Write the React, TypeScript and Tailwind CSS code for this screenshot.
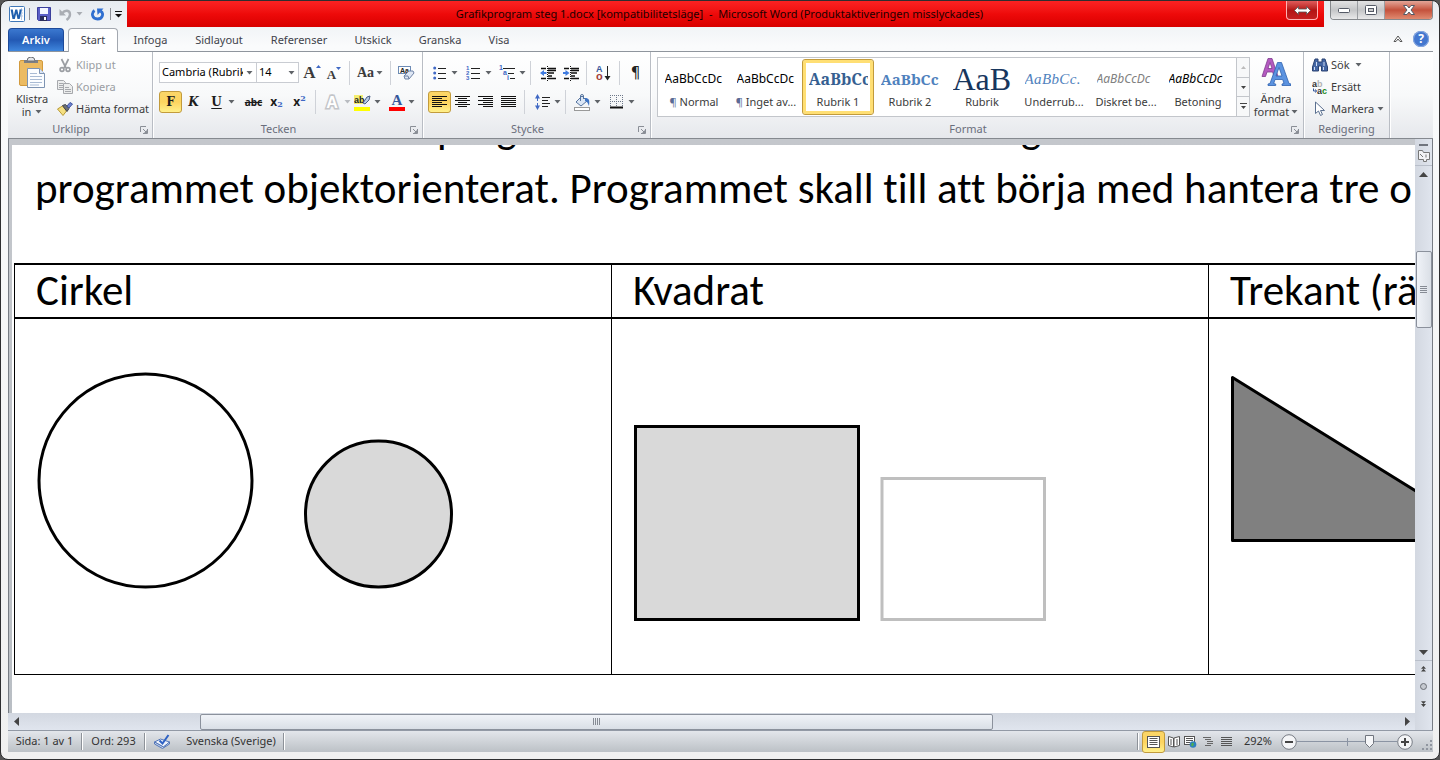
import React from "react";

type Kids = { children?: React.ReactNode };

const Caret = ({ tone = "#5f6368" }: { tone?: string }) => (
  <svg width="7" height="4" viewBox="0 0 7 4" className="shrink-0" aria-hidden="true">
    <path d="M0.5 0h6L3.5 3.6z" fill={tone} />
  </svg>
);

const Sep = () => <span className="h-6 w-px shrink-0 bg-[#cfd2d8]" />;

const Tool = ({ label, on = false, children }: Kids & { label: string; on?: boolean }) => (
  <button
    aria-label={label}
    className={
      on
        ? "flex h-[22px] w-[23px] shrink-0 items-center justify-center rounded-[3px] border border-[#c29b3c] bg-linear-to-b from-[#fbd668] via-[#fdd45f] to-[#fff08a]"
        : "flex h-[22px] w-[23px] shrink-0 items-center justify-center"
    }
  >
    {children}
  </button>
);

const Drop = ({ label, tone, tight = false }: { label: string; tone?: string; tight?: boolean }) => (
  <button
    aria-label={label}
    className={tight ? "flex h-[22px] w-[7px] shrink-0 items-center" : "flex h-[22px] w-[11px] shrink-0 items-center"}
  >
    <Caret tone={tone} />
  </button>
);

const Launcher = () => (
  <button aria-label="Visa dialogruta" className="absolute right-1 bottom-1">
    <svg width="8" height="8" viewBox="0 0 8 8" fill="none" stroke="#8a8e96">
      <path d="M0.5 6V0.5H6M3 3l3 3M7.5 3v4.5H3" />
      <path d="M7 4v3H4z" fill="#8a8e96" stroke="none" />
    </svg>
  </button>
);

const Group = ({
  title,
  size,
  launcher = true,
  children,
}: Kids & { title: string; size: string; launcher?: boolean }) => (
  <section
    aria-label={title}
    className={`relative flex shrink-0 flex-col border-r border-[#b9bdc4] shadow-[1px_0_0_#fff] ${size}`}
  >
    <div className="flex h-[69px] min-w-0">{children}</div>
    <h2 className={launcher ? "pr-[18px] text-center leading-4 text-[#6a6e7c]" : "text-center leading-4 text-[#6a6e7c]"}>{title}</h2>
    {launcher && <Launcher />}
  </section>
);

const WordLogo = () => (
  <svg width="16" height="16" viewBox="0 0 16 16" className="shrink-0" aria-hidden="true">
    <rect x="0.5" y="0.5" width="15" height="15" rx="1" fill="#fff" stroke="#3f78b8" />
    <path d="M12.500 2v12M10 4h4M10 7h4M10 10h4" stroke="#b7cbe4" />
    <path d="M1.6 3.5h2.2l1 6 1.5-6h2l1.3 6 1.1-6h2.1L10.7 13H8.5L7.2 7.5 5.8 13H3.5z" fill="#1f5fae" />
  </svg>
);

const SaveIcon = () => (
  <svg width="14" height="14" viewBox="0 0 14 14" aria-hidden="true">
    <path d="M0.5 0.5h13v13h-12l-1-1z" fill="#5b5fc7" stroke="#3b3f9c" />
    <rect x="3" y="1" width="8" height="6" fill="#f4f7ff" />
    <rect x="3" y="9" width="7" height="5" fill="#2a2d5c" />
    <rect x="7" y="10" width="2" height="3" fill="#fff" />
  </svg>
);

const UndoIcon = () => (
  <svg width="13" height="13" viewBox="0 0 13 13" fill="none" aria-hidden="true">
    <path d="M3 5.500C6 1.500 11 2 11 6.500c0 2.500-1.500 4-3.500 5.500" stroke="#a9adb3" strokeWidth="2.400" />
    <path d="M0.500 1v6.500h6.500z" fill="#a9adb3" />
  </svg>
);

const RedoIcon = () => (
  <svg width="13" height="13" viewBox="0 0 13 13" fill="none" aria-hidden="true">
    <path d="M3.500 2.500C0 5 1 11 6.500 11s6.500-6 3-8" stroke="#2f6fd0" strokeWidth="2.800" />
    <path d="M6 0.500h6.500L6.500 7z" fill="#2f6fd0" />
  </svg>
);

const PasteIcon = () => (
  <svg width="28" height="32" viewBox="0 0 28 32" aria-hidden="true">
    <rect x="1.500" y="3.500" width="23" height="25" rx="1.500" fill="#ecbb62" stroke="#d29a3d" />
    <path d="M6 3h14v3H6z" fill="#7d8085" />
    <path d="M9 4a4 4 0 0 1 8 0z" fill="#e5e7ea" stroke="#6e7176" />
    <path d="M9.500 11.500h12l5 5v14h-17z" fill="#fbfdff" stroke="#7d93b2" />
    <path d="M21.500 11.500v5h5" fill="#dbe6f5" stroke="#7d93b2" />
    <path d="M12 16.500h7M12 19.500h12M12 22.500h12M12 25.500h12M12 28h9" stroke="#a9bbd4" />
  </svg>
);

const CutIcon = () => (
  <svg width="16" height="15" viewBox="0 0 16 15" fill="none" stroke="#9b9ea3" strokeWidth="1.700" aria-hidden="true">
    <path d="M4.500 1l4.500 9M11.500 1L7 10" />
    <circle cx="5" cy="11.500" r="1.900" />
    <circle cx="11" cy="11.500" r="1.900" />
  </svg>
);

const CopyIcon = () => (
  <svg width="16" height="14" viewBox="0 0 16 14" fill="#eceded" stroke="#a6a8ac" aria-hidden="true">
    <path d="M0.500 0.500h6l2 2v7h-8z" />
    <path d="M2 3.500h4M2 5.500h4M2 7.500h4" />
    <path d="M6.500 3.500h6l3 3v7h-9z" />
    <path d="M8 7.500h4M8 9.500h6M8 11.500h6" />
  </svg>
);

const BrushIcon = () => (
  <svg width="16" height="14" viewBox="0 0 16 14" aria-hidden="true">
    <path d="M0.500 7l5-3 4 5-3.500 4.500z" fill="#f4df82" stroke="#b99a35" />
    <path d="M5.500 3.500l3-1 3.500 4-2 3z" fill="#6c7078" stroke="#43464d" />
    <path d="M10 4l3-3.500 2.500 1.500-3.500 4z" fill="#6f84cf" stroke="#3f53a0" />
  </svg>
);

const ClearIcon = () => (
  <svg width="17" height="16" viewBox="0 0 17 16" aria-hidden="true">
    <rect x="0.500" y="1.500" width="12" height="7" fill="#fff" stroke="#6d8bb5" />
    <text x="2" y="8" fontSize="7" fontWeight="700" fontFamily="Liberation Sans" fill="#222">Aa</text>
    <path d="M6 11l5-5h4l1 2-5 6H7z" fill="#dfe7f4" stroke="#6f83a6" />
    <path d="M6 11l4 0 1 3" fill="none" stroke="#6f83a6" />
  </svg>
);

const HighlightIcon = () => (
  <svg width="17" height="17" viewBox="0 0 17 17" aria-hidden="true">
    <rect x="0" y="1" width="9" height="9" fill="#f4ee70" />
    <text x="0" y="9" fontSize="9" fontWeight="700" fontFamily="Liberation Sans" fill="#222">ab</text>
    <path d="M9 9l4-6 3-1-1 4-4 4z" fill="#b9cbe6" stroke="#4a5f86" />
    <rect x="0" y="13" width="16" height="4" fill="#ff0" />
  </svg>
);

const FontColorIcon = () => (
  <svg width="16" height="17" viewBox="0 0 16 17" aria-hidden="true">
    <text x="8" y="11" textAnchor="middle" fontSize="15" fontWeight="700" fontFamily="Liberation Serif" fill="#35579b">A</text>
    <rect x="0" y="13" width="16" height="4" fill="#f00" />
  </svg>
);

const BulletIcon = () => (
  <svg width="14" height="14" viewBox="0 0 14 14" aria-hidden="true">
    <g fill="#3f68c4">
      <circle cx="1.700" cy="2" r="1.500" />
      <circle cx="1.700" cy="7" r="1.500" />
      <circle cx="1.700" cy="12" r="1.500" />
    </g>
    <path d="M5 2.500h8M5 7.500h8M5 12.500h8" stroke="#222" />
  </svg>
);

const NumberIcon = () => (
  <svg width="15" height="16" viewBox="0 0 15 16" aria-hidden="true">
    <g fill="#3f68c4" fontSize="6" fontWeight="700" fontFamily="Liberation Sans">
      <text x="0" y="5">1</text>
      <text x="0" y="10">2</text>
      <text x="0" y="15">3</text>
    </g>
    <path d="M5 3.500h9M5 8.500h9M5 13.500h9" stroke="#222" />
  </svg>
);

const MultiIcon = () => (
  <svg width="17" height="16" viewBox="0 0 17 16" aria-hidden="true">
    <g fill="#3f68c4" fontSize="7" fontWeight="700" fontFamily="Liberation Sans">
      <text x="0" y="5">1</text>
      <text x="4" y="10">a</text>
      <text x="8" y="15">i</text>
    </g>
    <path d="M4 3.500h12M9 8.500h6M11 13.500h5" stroke="#222" />
  </svg>
);

const IndentIcon = ({ out = false }: { out?: boolean }) => (
  <svg width="17" height="15" viewBox="0 0 17 15" aria-hidden="true">
    <path d="M1 2.500h5M8 2.500h8M8 4.500h8M8 7h6M8 10h4M1 12.500h5M8 12.500h8" stroke="#111" strokeWidth="1.400" />
    <path d="M7.500 0v15" stroke="#111" strokeDasharray="1 1" />
    <path d={out ? "M0 7l4-3v2h2.500v2H4v2z" : "M6.500 7l-4-3v2H0v2h2.500v2z"} fill="#3f7be0" />
  </svg>
);

const SortIcon = () => (
  <svg width="15" height="16" viewBox="0 0 15 16" aria-hidden="true">
    <text x="0" y="7" fontSize="9" fontWeight="700" fontFamily="Liberation Sans" fill="#35579b">A</text>
    <text x="0" y="15" fontSize="11" fontWeight="700" fontFamily="Liberation Sans" fill="#a3403a">o</text>
    <path d="M11.500 1v12" stroke="#222" />
    <path d="M8.500 11h6l-3 4.500z" fill="#222" />
  </svg>
);

const AlignIcon = ({ d }: { d: string }) => (
  <svg width="15" height="12" viewBox="0 0 15 12" aria-hidden="true">
    <path d={d} stroke="#111" />
  </svg>
);

const SpacingIcon = () => (
  <svg width="15" height="16" viewBox="0 0 15 16" aria-hidden="true">
    <path d="M2.500 3v10" stroke="#3f68c4" strokeDasharray="4 2" />
    <path d="M0 4.500L2.500 0 5 4.500zM0 11.500L2.500 16 5 11.500z" fill="#3f68c4" />
    <path d="M7 3.500h8M7 6.500h6M7 9.500h8M7 12.500h6" stroke="#222" />
  </svg>
);

const BucketIcon = () => (
  <svg width="17" height="17" viewBox="0 0 17 17" aria-hidden="true">
    <path d="M2 8l6-6 5 5-6 5z" fill="#dbe6f5" stroke="#56749f" />
    <path d="M6.500 7V2a1.500 1.500 0 0 1 3 0v3" fill="none" stroke="#56749f" />
    <path d="M11 4c4 0 5 2 4 8-1-2-1-4-4-5z" fill="#3f74c4" />
    <rect x="0.500" y="13.500" width="15" height="3" fill="#fff" stroke="#999" />
  </svg>
);

const BorderIcon = () => (
  <svg width="13" height="14" viewBox="0 0 13 14" aria-hidden="true">
    <path d="M0.500 0v12M6.500 0v12M12.500 0v12M0 0.500h13M0 6.500h13" stroke="#6d7789" strokeDasharray="1 1" />
    <path d="M0 12.500h13" stroke="#111" strokeWidth="2" />
  </svg>
);

const ChangeStylesIcon = () => (
  <svg width="30" height="29" viewBox="0 0 30 29" aria-hidden="true">
    <path d="M1 18.500L7 0.500h4l6 18h-4l-1.300-4.500H6L4.500 18.500zM7 10.500h4L9 4.500z" fill="#b45ac0" stroke="#7e3b8e" strokeWidth="0.800" fillRule="evenodd" />
    <path d="M7 27.500v-1.500l2-0.500L16.500 4.500h4L28 25.500l2 0.500v1.500h-9v-1.500l2-0.500-1.300-4H14l-1.300 4 2 0.500v1.500zM15 18h6L18 9.500z" fill="#5b93e0" stroke="#2f62b0" strokeWidth="0.800" fillRule="evenodd" />
  </svg>
);

const FindIcon = () => (
  <svg width="16" height="14" viewBox="0 0 16 14" aria-hidden="true">
    <path d="M3 1h3v3h4V1h3l2.500 8v4H9.500V8h-3v5H0.500V9z" fill="#4467a5" stroke="#2a4272" />
    <path d="M2.500 9v3M4.500 4v4M11.500 9v3M12 4v4" stroke="#cfdcf2" />
  </svg>
);

const ReplaceIcon = () => (
  <svg width="16" height="16" viewBox="0 0 16 16" aria-hidden="true">
    <g fontSize="9" fontWeight="700" fontFamily="Liberation Sans">
      <text x="0" y="8" fill="#333">a</text>
      <text x="5" y="8" fill="#b3b3b3">b</text>
      <text x="5" y="15" fill="#333">a</text>
      <text x="10" y="15" fill="#1b8a1b">c</text>
    </g>
    <path d="M1.500 9.500v2.500h3M3 10.500L4.700 12 3 13.500" fill="none" stroke="#35579b" />
  </svg>
);

const CursorIcon = () => (
  <svg width="16" height="16" viewBox="0 0 16 16" aria-hidden="true">
    <path d="M3.500 1v11.500l3-2.500 2 4.500 2-1-2-4h4z" fill="#fff" stroke="#5b7090" />
  </svg>
);

const tabs = ["Infoga", "Sidlayout", "Referenser", "Utskick", "Granska", "Visa"];
const tabSize = ["w-[59px]", "w-[78px]", "w-[82px]", "w-[66px]", "w-[68px]", "w-[50px]"];

const styles = [
  { name: "Normal", mark: true, sample: "AaBbCcDc", look: "text-[12px] text-black" },
  { name: "Inget av...", mark: true, sample: "AaBbCcDc", look: "text-[12px] text-black" },
  { name: "Rubrik 1", on: true, sample: "AaBbCc", look: "font-['Noto_Serif','DejaVu_Serif','Liberation_Serif',serif] text-[16px] font-bold text-[#365f91]" },
  { name: "Rubrik 2", sample: "AaBbCc", look: "font-['Noto_Serif','DejaVu_Serif','Liberation_Serif',serif] text-[15px] font-bold text-[#4f81bd]" },
  { name: "Rubrik", sample: "AaB", look: "font-['Liberation_Serif',serif] text-[32px] text-[#17365d]" },
  { name: "Underrub...", sample: "AaBbCc.", look: "font-['Liberation_Serif',serif] text-[15px] italic tracking-wide text-[#4f81bd]" },
  { name: "Diskret be...", sample: "AaBbCcDc", look: "text-[12px] italic text-[#808080]" },
  { name: "Betoning", sample: "AaBbCcDc", look: "text-[12px] italic text-black" },
];

const TitleBar = () => (
  <header className="flex h-[26px] shrink-0 items-start">
    <div className="flex h-[26px] w-[119px] shrink-0 items-center pl-px">
      <WordLogo />
      <span className="ml-1 h-3 w-px bg-[#8d9096]" />
      <button aria-label="Spara" className="ml-[7px]"><SaveIcon /></button>
      <button aria-label="Ångra" className="ml-2"><UndoIcon /></button>
      <button aria-label="Ångra flera" className="ml-1"><Caret tone="#a9adb3" /></button>
      <button aria-label="Upprepa" className="ml-2"><RedoIcon /></button>
      <span className="ml-1.5 h-3 w-px bg-[#8d9096]" />
      <button aria-label="Anpassa verktygsfältet" className="ml-1">
        <svg width="7" height="7" viewBox="0 0 7 7"><path d="M0 0.500h7" stroke="#111" /><path d="M0 3h7L3.500 6.500z" fill="#111" /></svg>
      </button>
    </div>
    <div className="flex h-[26px] min-w-0 flex-1 items-start bg-linear-to-b from-[#fb2222] via-[#ee0a0a] to-[#d80000] pr-1.5">
      <h1 className="min-w-0 flex-1 truncate pl-[26px] text-center leading-[26px] text-[#1c0000]">
        Grafikprogram steg 1.docx [kompatibilitetsläge]&nbsp; -&nbsp; Microsoft Word (Produktaktiveringen misslyckades)
      </h1>
      <button aria-label="Växla skärm" className="flex h-[19px] w-8 shrink-0 items-center justify-center rounded-b-[4px] border border-t-0 border-[#ffb3b3] bg-linear-to-b from-[#e05a5a] via-[#b31414] to-[#c42020]">
        <svg width="17" height="9" viewBox="0 0 17 9"><path d="M0.500 4.500l4-4v2.500h8V0.500l4 4-4 4V6h-8v2.500z" fill="#fff" stroke="#555" strokeWidth="0.800" /></svg>
      </button>
    </div>
    <div className="ml-1.5 flex h-[19px] w-[103px] shrink-0 overflow-hidden rounded-b-[4px] border border-t-0 border-[#85888c]">
      <button aria-label="Minimera" className="flex flex-1 items-center justify-center border-r border-[#9a9da1] bg-linear-to-b from-[#e2e2e3] via-[#c4c5c7] to-[#e9e9ea]">
        <svg width="12" height="5" viewBox="0 0 12 5"><rect x="0.500" y="0.500" width="11" height="4" rx="1" fill="#fff" stroke="#555a66" /></svg>
      </button>
      <button aria-label="Återställ" className="flex flex-1 items-center justify-center border-r border-[#9a9da1] bg-linear-to-b from-[#e2e2e3] via-[#c4c5c7] to-[#e9e9ea]">
        <svg width="12" height="10" viewBox="0 0 12 10"><rect x="0.500" y="0.500" width="11" height="9" rx="1" fill="#fff" stroke="#555a66" /><rect x="3.500" y="3.500" width="5" height="3" fill="#ccc" stroke="#555a66" /></svg>
      </button>
      <button aria-label="Stäng" className="flex w-[47px] items-center justify-center bg-linear-to-b from-[#e3a598] via-[#c4513c] to-[#e08a70]">
        <svg width="12" height="10" viewBox="0 0 12 10"><path d="M0.500 0.500h3.500L6 3l2-2.500h3.500L8 5l3.500 4.500H8L6 7 4 9.500H0.500L4 5z" fill="#fff" stroke="#555a66" /></svg>
      </button>
    </div>
  </header>
);

const TabRow = () => (
  <nav aria-label="Menyflikar" className="relative z-10 flex h-6 shrink-0 items-end text-[#3f434b]">
    <button className="h-[23px] w-14 rounded-t-[4px] border border-b-0 border-[#1d4a9a] bg-linear-to-b from-[#3b78cf] via-[#2359b4] to-[#3f86dd] font-semibold text-white">Arkiv</button>
    <button className="-mb-px ml-1 h-6 w-[50px] rounded-t-[4px] border border-b-0 border-[#a3a8b0] bg-white">Start</button>
    <div className="ml-[3px] flex flex-1">
      {tabs.map((t, i) => (
        <button key={t} className={`h-[22px] ${tabSize[i]}`}>{t}</button>
      ))}
    </div>
    <div className="flex items-center gap-2.5 pr-1 pb-1">
      <button aria-label="Minimera menyfliksområdet">
        <svg width="10" height="8" viewBox="0 0 10 8" fill="#fff" stroke="#555" ><path d="M1 6.500L5 1l4 5.500H7L5 4 3 6.500z" /></svg>
      </button>
      <button aria-label="Hjälp" className="flex size-4 items-center justify-center rounded-full bg-[#4377cf] text-[12px] leading-4 font-bold text-white ring-1 ring-[#89a9e0] ring-inset">?</button>
    </div>
  </nav>
);

const fieldSelect = "h-[21px] w-full appearance-none border border-[#c9ccd2] bg-white pl-0.5 text-black";

const Ribbon = () => (
  <div className="flex h-[88px] shrink-0 overflow-hidden border-y border-t-[#8f959d] border-b-[#85898f] bg-linear-to-b from-white via-[#f8f9fa] to-[#e6e8ec] text-[#3b3b3b]">
    <Group title="Urklipp" size="w-[145px]">
      <button className="flex w-12 flex-col items-center pt-[5px]">
        <PasteIcon />
        <span className="mt-[3px] leading-[13px]">Klistra</span>
        <span className="flex items-center gap-1 leading-[13px]">in <Caret /></span>
      </button>
      <div className="flex flex-col pt-0.5 pl-px leading-[22px]">
        <button className="flex h-[22px] items-center gap-[3px] text-[#9a9da2]"><CutIcon />Klipp ut</button>
        <button className="flex h-[22px] items-center gap-[3px] text-[#9a9da2]"><CopyIcon />Kopiera</button>
        <button className="flex h-[22px] items-center gap-[3px]"><BrushIcon /><span className="whitespace-nowrap">Hämta format</span></button>
      </div>
    </Group>

    <Group title="Tecken" size="w-[270px]">
      <div className="flex flex-col gap-[7px] pt-2.5 pl-1.5">
        <div className="flex h-[21px] items-center">
          <div className="relative w-[98px]">
            <select aria-label="Teckensnitt" className={`${fieldSelect} pr-3`}><option>Cambria (Rubriker)</option></select>
            <span className="pointer-events-none absolute top-px right-px flex h-[19px] w-[13px] items-center justify-center bg-white"><Caret /></span>
          </div>
          <div className="relative -ml-px w-[43px]">
            <select aria-label="Teckenstorlek" className={fieldSelect}><option>14</option></select>
            <span className="pointer-events-none absolute top-px right-px flex h-[19px] w-[13px] items-center justify-center bg-white"><Caret /></span>
          </div>
          <div className="flex items-center pl-0.5">
            <button aria-label="Öka teckenstorlek" className="flex w-[22px] items-start justify-center font-['Liberation_Serif',serif] text-[17px] leading-5 font-bold">A<svg width="5" height="3" viewBox="0 0 5 3" className="mt-0.5"><path d="M0 3h5L2.500 0z" fill="#3f68c4" /></svg></button>
            <button aria-label="Minska teckenstorlek" className="flex w-[22px] items-start justify-center pt-1 font-['Liberation_Serif',serif] text-[13px] leading-4 font-bold">A<svg width="5" height="3" viewBox="0 0 5 3"><path d="M0 0h5L2.500 3z" fill="#3f68c4" /></svg></button>
          </div>
          <div className="flex items-center gap-[7px] pl-1">
            <Sep />
            <button className="flex h-[22px] items-center gap-0.5 font-['Liberation_Serif',serif] text-[14px] font-bold">Aa<Caret /></button>
            <Sep />
            <button aria-label="Radera formatering"><ClearIcon /></button>
          </div>
        </div>
        <div className="flex items-center font-['DejaVu_Serif','Liberation_Serif',serif] text-[12px] text-[#1c1c1c]">
          <Tool label="Fetstil" on><b>F</b></Tool>
          <Tool label="Kursiv"><b><i>K</i></b></Tool>
          <Tool label="Understruken"><b className="underline underline-offset-2">U</b></Tool>
          <Drop label="Understrykningsstil" />
          <span className="w-[3px]" />
          <Tool label="Genomstruken"><span className="font-['Noto_Sans',sans-serif] text-[10px] font-bold line-through">abc</span></Tool>
          <Tool label="Nedsänkt"><b className="font-['Noto_Sans',sans-serif]">x</b><sub className="text-[8px] font-bold text-[#3f68c4]">2</sub></Tool>
          <Tool label="Upphöjt"><b className="font-['Noto_Sans',sans-serif]">x</b><sup className="text-[8px] font-bold text-[#3f68c4]">2</sup></Tool>
          <span className="w-1" />
          <Sep />
          <span className="w-[5px]" />
          <Tool label="Texteffekter">
            <svg width="17" height="17" viewBox="0 0 17 17"><text x="8" y="14" textAnchor="middle" fontSize="16" fontWeight="700" fontFamily="Liberation Sans" fill="#fff" stroke="#c3c5c9" strokeWidth="3" paintOrder="stroke">A</text></svg>
          </Tool>
          <Drop label="Fler texteffekter" tone="#b9bcc1" tight />
          <Tool label="Överstrykning"><HighlightIcon /></Tool>
          <Drop label="Överstrykningsfärg" />
          <Tool label="Teckenfärg"><FontColorIcon /></Tool>
          <Drop label="Fler teckenfärger" />
        </div>
      </div>
    </Group>

    <Group title="Stycke" size="w-[228px]">
      <div className="flex flex-col gap-[7px] pt-2.5 pl-[5px]">
        <div className="flex h-[22px] items-center">
          <Tool label="Punktlista"><BulletIcon /></Tool><Drop label="Punkttecken" />
          <Tool label="Numrerad lista"><NumberIcon /></Tool><Drop label="Nummerformat" />
          <Tool label="Flernivålista"><MultiIcon /></Tool><Drop label="Listnivåer" />
          <Sep />
          <span className="w-1.5" />
          <Tool label="Minska indrag"><IndentIcon out /></Tool>
          <Tool label="Öka indrag"><IndentIcon /></Tool>
          <span className="w-[3px]" />
          <Sep />
          <span className="w-[5px]" />
          <Tool label="Sortera"><SortIcon /></Tool>
          <span className="w-1" />
          <Sep />
          <span className="w-1" />
          <Tool label="Visa alla tecken"><span className="font-['DejaVu_Sans',sans-serif] text-[15px] text-[#222]">¶</span></Tool>
        </div>
        <div className="flex h-[22px] items-center">
          <Tool label="Vänsterjustera" on><AlignIcon d="M0 .5h15M0 2.500h10M0 4.500h15M0 6.500h10M0 8.500h15M0 10.500h10" /></Tool>
          <Tool label="Centrera"><AlignIcon d="M0 .5h15M3 2.500h9M0 4.500h15M3 6.500h9M0 8.500h15M3 10.500h9" /></Tool>
          <Tool label="Högerjustera"><AlignIcon d="M0 .5h15M5 2.500h10M0 4.500h15M5 6.500h10M0 8.500h15M5 10.500h10" /></Tool>
          <Tool label="Marginaljustera"><AlignIcon d="M0 .5h15M0 2.500h15M0 4.500h15M0 6.500h15M0 8.500h15M0 10.500h15" /></Tool>
          <span className="w-1" />
          <Sep />
          <span className="w-1.5" />
          <Tool label="Radavstånd"><SpacingIcon /></Tool><Drop label="Radavståndsalternativ" />
          <Sep />
          <span className="w-[5px]" />
          <Tool label="Skuggning"><BucketIcon /></Tool><Drop label="Skuggningsfärg" />
          <Tool label="Kantlinje"><BorderIcon /></Tool><Drop label="Kantlinjer" />
        </div>
      </div>
    </Group>

    <Group title="Format" size="w-[653px]">
      <div className="ml-1.5 mt-[5px] flex h-[60px] w-[593px] shrink-0 border border-[#c3c6cb] bg-white">
        <div className="flex w-[578px] shrink-0">
          {styles.map((s) => (
            <button
              key={s.name}
              className={
                s.on
                  ? "my-px flex w-[72px] flex-col items-center rounded-[3px] border border-[#c29b3c] ring-3 ring-[#ffdf74] ring-inset"
                  : "my-px flex w-[72px] flex-col items-center border border-transparent"
              }
            >
              <span className="mt-1 flex h-[30px] w-[59px] items-center overflow-hidden">
                <span className={`whitespace-nowrap leading-none ${s.look}`}>{s.sample}</span>
              </span>
              <span className="leading-4 whitespace-nowrap">{s.mark && <span className="text-[#5b6b94]">¶ </span>}{s.name}</span>
            </button>
          ))}
        </div>
        <div className="flex w-[13px] flex-col border-l border-[#c3c6cb] bg-[#f7f8f9]">
          <button aria-label="Föregående rad" className="flex flex-1 items-center justify-center"><svg width="5" height="3" viewBox="0 0 5 3"><path d="M0 3h5L2.500 0z" fill="#bbb" /></svg></button>
          <button aria-label="Nästa rad" className="flex flex-1 items-center justify-center border-y border-[#c3c6cb]"><svg width="5" height="3" viewBox="0 0 5 3"><path d="M0 0h5L2.500 3z" fill="#444" /></svg></button>
          <button aria-label="Fler format" className="flex flex-1 items-center justify-center"><svg width="7" height="7" viewBox="0 0 7 7"><path d="M0 0.500h7" stroke="#444" /><path d="M1 3h5L3.500 6z" fill="#444" /></svg></button>
        </div>
      </div>
      <button className="flex w-[52px] flex-col items-center pt-1.5">
        <ChangeStylesIcon />
        <span className="mt-[5px] leading-[13px]">Ändra</span>
        <span className="flex items-center gap-0.5 leading-[13px]">format <Caret /></span>
      </button>
    </Group>

    <Group title="Redigering" size="w-[86px]" launcher={false}>
      <div className="flex flex-col pt-0.5 pl-2">
        <button className="flex h-[22px] items-center gap-[3px]"><FindIcon />Sök<span className="pl-0.5"><Caret /></span></button>
        <button className="flex h-[22px] items-center gap-[3px]"><ReplaceIcon />Ersätt</button>
        <button className="flex h-[22px] items-center gap-[3px]"><CursorIcon />Markera<Caret /></button>
      </div>
    </Group>
  </div>
);

const head = "h-[54px] w-[597px] border-x border-y-2 border-black pl-[21px] text-left align-middle font-normal";
const cell = "border border-black p-0 align-top";

const Document = () => (
  <main className="min-h-0 flex-1 overflow-hidden bg-white font-['Carlito','Lato',sans-serif] text-[43px] leading-[60px] whitespace-nowrap text-black [font-variant-ligatures:none]">
    <div className="-mt-[46px] flex pl-[425px]">
      <span className="w-[584px]">prog</span>
      <span>g</span>
    </div>
    <p className="pl-[23px]">programmet objektorienterat. Programmet skall till att börja med hantera tre o</p>
    <table className="mt-11 ml-0.5 w-[1792px] table-fixed border-collapse leading-[52px]">
      <thead>
        <tr>
          <th className={head}>Cirkel</th>
          <th className={head}>Kvadrat</th>
          <th className={head}>Trekant (rätvinklig)</th>
        </tr>
      </thead>
      <tbody>
        <tr>
          <td className={cell}>
            <svg width="590" height="355" viewBox="15 319 590 355" className="block" stroke="#000" strokeWidth="3">
              <circle cx="145.500" cy="480.500" r="106.500" fill="#fff" />
              <circle cx="378.500" cy="514" r="73" fill="#d9d9d9" />
            </svg>
          </td>
          <td className={cell}>
            <svg width="590" height="355" viewBox="612 319 590 355" className="block" strokeWidth="3">
              <rect x="635.500" y="426.500" width="223" height="193" fill="#d9d9d9" stroke="#000" />
              <rect x="882" y="478.500" width="162.500" height="141" fill="#fff" stroke="#bfbfbf" />
            </svg>
          </td>
          <td className={cell}>
            <svg width="590" height="355" viewBox="1209 319 590 355" className="block" strokeWidth="3">
              <path d="M1232.500 377.500V540.500H1496z" fill="#808080" stroke="#000" strokeLinejoin="round" />
            </svg>
          </td>
        </tr>
      </tbody>
    </table>
  </main>
);

const HScroll = () => (
  <div className="flex h-[17px] shrink-0 items-center bg-linear-to-b from-[#d3d8e1] to-[#e0e5ee]">
    <button aria-label="Rulla åt vänster" className="flex w-4 justify-center"><svg width="5" height="9" viewBox="0 0 5 9"><path d="M5 0v9L0 4.500z" fill="#444" /></svg></button>
    <span className="grow-[176] basis-0" />
    <div className="flex h-4 grow-[792] basis-0 items-center justify-center gap-px rounded-[2px] border border-[#8b919c] bg-linear-to-b from-[#f0f3f8] to-[#dadfe6]">
      {[0, 1, 2, 3].map((i) => <span key={i} className="h-[7px] w-px bg-[#868b94]" />)}
    </div>
    <span className="grow-[407] basis-0" />
    <button aria-label="Rulla åt höger" className="flex w-4 justify-center"><svg width="5" height="9" viewBox="0 0 5 9"><path d="M0 0v9l5-4.500z" fill="#444" /></svg></button>
  </div>
);

const VScroll = () => (
  <div className="flex w-[17px] shrink-0 flex-col items-center bg-linear-to-r from-[#d3d8e1] to-[#e0e5ee]">
    <span className="mt-[5px] h-0.5 w-[9px] bg-[#70757e]" />
    <button aria-label="Linjal" className="flex h-5 w-full items-center justify-center border-b border-[#b9bfca]">
      <svg width="12" height="12" viewBox="0 0 12 12" fill="#f3f3f5" stroke="#777"><path d="M0.500 0.500h4l1 2h6v7H8.500v2h-3v-2h-5z" /><path d="M2 4l3 3M8 4.500v3" /></svg>
    </button>
    <button aria-label="Rulla uppåt" className="flex h-4 items-center"><svg width="9" height="5" viewBox="0 0 9 5"><path d="M0 5h9L4.500 0z" fill="#444" /></svg></button>
    <span className="grow-[70] basis-0" />
    <div className="flex w-4 grow-[76] basis-0 flex-col items-center justify-center gap-px rounded-[2px] border border-[#8b919c] bg-linear-to-r from-[#f0f3f8] to-[#dadfe6]">
      {[0, 1, 2, 3].map((i) => <span key={i} className="h-px w-[7px] bg-[#868b94]" />)}
    </div>
    <span className="grow-[320] basis-0" />
    <button aria-label="Rulla nedåt" className="flex h-4 w-full items-center justify-center border-b border-[#b9bfca]"><svg width="9" height="5" viewBox="0 0 9 5"><path d="M0 0h9L4.500 5z" fill="#444" /></svg></button>
    <div className="flex h-[69px] flex-col items-center gap-[11px] pt-[5px]">
      <button aria-label="Föregående"><svg width="5" height="6" viewBox="0 0 5 6" className="block"><path d="M0 2.800h5L2.500 0zM0 5.500h5L2.500 2.700z" fill="#444" /></svg></button>
      <button aria-label="Bläddra"><svg width="7" height="7" viewBox="0 0 7 7" className="block"><circle cx="3.500" cy="3.500" r="3" fill="#c5c9d0" stroke="#6a6e76" /></svg></button>
      <button aria-label="Nästa"><svg width="5" height="6" viewBox="0 0 5 6" className="block"><path d="M0 0.300h5L2.500 3zM0 3h5L2.500 6z" fill="#444" /></svg></button>
    </div>
  </div>
);

const Bar = () => <span className="h-[17px] w-0.5 border-r border-l border-r-white border-l-[#8d9299]" />;

const StatusBar = () => (
  <footer className="flex h-[22px] shrink-0 items-center border-t border-[#9299a5] bg-linear-to-b from-[#e3e6eb] to-[#bcc1c6] text-[#333]">
    <button className="w-[73px]">Sida: 1 av 1</button>
    <Bar />
    <button className="w-[61px]">Ord: 293</button>
    <Bar />
    <button aria-label="Språkkontroll" className="ml-2 w-[17px]">
      <svg width="17" height="16" viewBox="0 0 17 16"><path d="M0.500 8l6-3 9 3-6 5z" fill="#eef3fb" stroke="#5477b8" /><path d="M0.500 8v2l8 4.500 7-4.500V8l-6 5z" fill="#c3d3ee" stroke="#5477b8" /><path d="M5.500 6.500l3 3L14.500 1" fill="none" stroke="#2f62c4" strokeWidth="2" /></svg>
    </button>
    <button className="ml-2 w-[104px]">Svenska (Sverige)</button>
    <Bar />
    <span className="flex-1" />
    <Bar />
    <div className="flex items-center gap-0.5 pl-[3px]">
      <Tool label="Utskriftslayout" on>
        <svg width="13" height="12" viewBox="0 0 13 12" stroke="#555"><rect x="0.500" y="0.500" width="12" height="11" fill="#fff" /><path d="M2.500 2.500h8M2.500 4.500h8M2.500 6.500h8M2.500 8.500h8" /></svg>
      </Tool>
      <button aria-label="Helskärmsläsning" className="px-px"><svg width="12" height="12" viewBox="0 0 12 12" fill="#fff" stroke="#555"><path d="M0.500 0.500l5 1.500v9l-5-1.500zM11.500 0.500L6 2v9l5.500-1.500z" /><path d="M2 4h2M2 6h2M2 8h2M8 4h2M8 6h2M8 8h2" /></svg></button>
      <button aria-label="Weblayout" className="px-px"><svg width="13" height="12" viewBox="0 0 13 12"><rect x="0.500" y="0.500" width="10" height="8" fill="#fff" stroke="#555" /><path d="M2 2.500h7M2 4.500h7M2 6.500h4" stroke="#555" /><circle cx="9" cy="8.500" r="3.300" fill="#2e7fc0" /><path d="M8 6.500l2 1-1 3-2-1z" fill="#4db04d" /></svg></button>
      <button aria-label="Disposition" className="px-[3px]"><svg width="10" height="10" viewBox="0 0 10 10" stroke="#666"><path d="M0 .5h8M2 2.500h6M4 4.500h6M4 6.500h6M2 8.500h6" /></svg></button>
      <button aria-label="Utkast" className="px-[3px]"><svg width="11" height="10" viewBox="0 0 11 10" stroke="#555"><path d="M0 .5h11M0 2.500h11M0 4.500h11M0 6.500h11M0 8.500h11" /></svg></button>
    </div>
    <button className="w-[46px] text-center">292%</button>
    <button aria-label="Zooma ut"><svg width="16" height="16" viewBox="0 0 16 16"><circle cx="8" cy="8" r="7.300" fill="#f4f5f7" stroke="#777c84" /><path d="M4 8h8" stroke="#444" strokeWidth="2" /></svg></button>
    <div className="relative h-4 w-[100px]">
      <svg width="100" height="16" viewBox="0 0 100 16" aria-hidden="true"><path d="M0 7.500h100M50.500 4v8" stroke="#8b94a3" /><path d="M68.500 1.500h8v8l-4 4-4-4z" fill="#f6f7f9" stroke="#70757e" /></svg>
      <input type="range" aria-label="Zoom" min="10" max="500" defaultValue="292" className="absolute inset-0 w-full opacity-0" />
    </div>
    <button aria-label="Zooma in"><svg width="16" height="16" viewBox="0 0 16 16"><circle cx="8" cy="8" r="7.300" fill="#f4f5f7" stroke="#777c84" /><path d="M4 8h8M8 4v8" stroke="#444" strokeWidth="2" /></svg></button>
    <svg width="20" height="20" viewBox="0 0 20 20" fill="#9096a0" aria-hidden="true"><path d="M17 8h2v2h-2zM13 12h2v2h-2zM17 12h2v2h-2zM9 16h2v2H9zM13 16h2v2h-2zM17 16h2v2h-2z" /></svg>
  </footer>
);

export default function App() {
  return (
    <div className="flex h-screen flex-col bg-[#555] font-['Noto_Sans','Open_Sans',sans-serif] text-[11px]">
      <div className="flex min-h-0 flex-1 flex-col rounded-lg border border-[#2e2e30] bg-linear-to-b from-[#e6ebf0] via-[#fafbfc] via-6% to-[#f0f0f0] pr-1.5 pb-[7px] pl-[7px]">
        <TitleBar />
        <TabRow />
        <div className="flex min-h-0 flex-1 flex-col">
          <Ribbon />
          <div className="flex min-h-0 flex-1 border-r border-[#777c84]">
            <div className="flex min-w-0 flex-1 flex-col">
              <div className="flex min-h-0 flex-1 border-l border-[#777c84] bg-linear-to-b from-[#c4c7cc] to-[#b9bec4] pt-1.5 pl-[3px]">
                <Document />
              </div>
              <HScroll />
            </div>
            <VScroll />
          </div>
          <StatusBar />
        </div>
      </div>
    </div>
  );
}
